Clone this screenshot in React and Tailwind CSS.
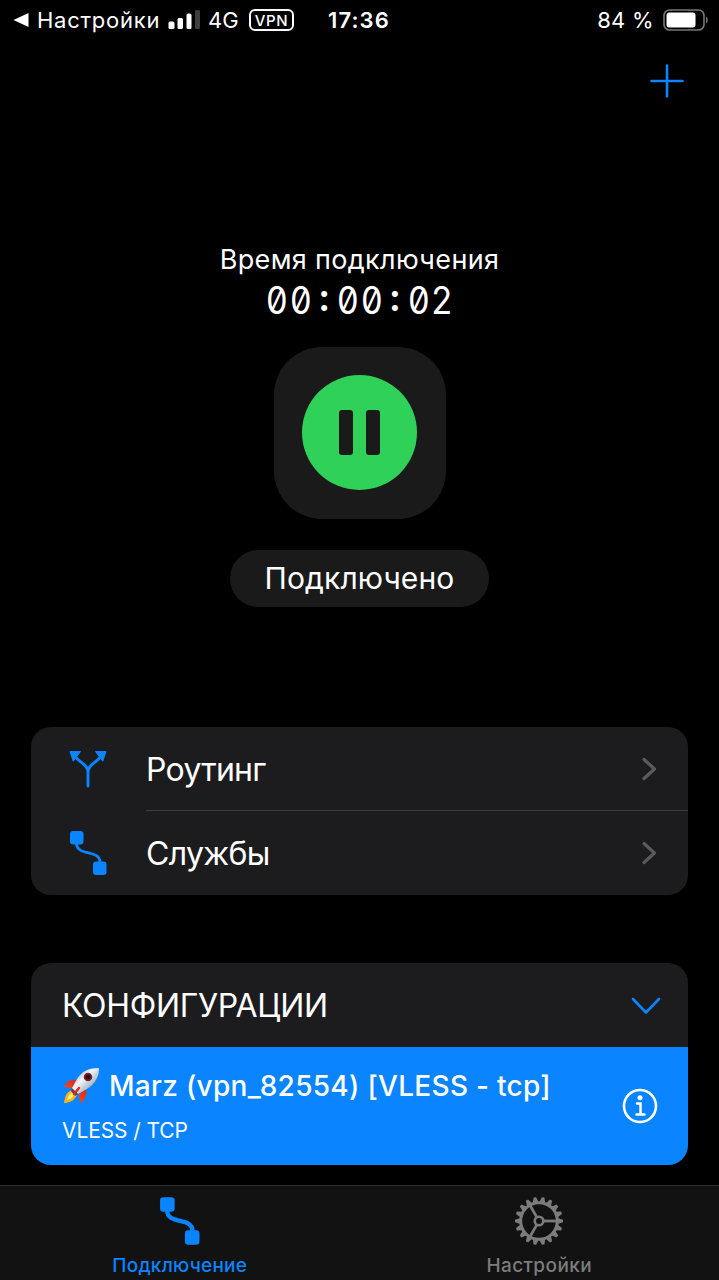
import React, { useState } from 'react';

const MENU = [
  { id: 'routing', label: 'Роутинг', icon: RoutingIcon },
  { id: 'services', label: 'Службы', icon: LinkIcon },
];

function RoutingIcon() {
  return (
    <svg width="38" height="38" viewBox="0 0 38 38" fill="none">
      <path d="M19 36V22C19 15 11.500 13 7 7.500M19 22C19 15 26.500 13 31 7.500" stroke="#0a84ff" strokeWidth="2.900" strokeLinecap="round" />
      <path d="M1 1.500h10.500L4.200 11.200zM37 1.500H26.500L33.800 11.200z" fill="#0a84ff" stroke="#0a84ff" strokeWidth="1" strokeLinejoin="round" />
    </svg>
  );
}

function LinkIcon({ className = 'w-[38px] h-[46px]', stroke = 2.8 }) {
  return (
    <svg className={className} viewBox="0 0 38 46" fill="none">
      <rect x="1" y="1" width="13.500" height="13.500" rx="3" fill="#0a84ff" />
      <rect x="24" y="31.500" width="13.500" height="13.500" rx="3" fill="#0a84ff" />
      <path d="M7.500 13C7.500 27 31 19 31 32" stroke="#0a84ff" strokeWidth={stroke} />
    </svg>
  );
}

function GearIcon() {
  const teeth = Array.from({ length: 18 }, (_, i) => i * 20);
  return (
    <svg width="50" height="50" viewBox="-25 -25 50 50" fill="none" stroke="#7c7c7c">
      {teeth.map((a) => (
        <path key={a} d="M18.500 -3L24 -1.300V1.300L18.500 3z" fill="#7c7c7c" stroke="none" transform={`rotate(${a})`} />
      ))}
      <circle r="18.300" strokeWidth="3" />
      <circle r="4.300" strokeWidth="2.600" />
      {[0, 120, 240].map((a) => (
        <path key={a} d="M5 0H18" strokeWidth="2.800" transform={`rotate(${a})`} />
      ))}
    </svg>
  );
}

function Rocket() {
  return (
    <svg width="38" height="38" viewBox="0 0 38 38">
      <defs>
        <linearGradient id="hull" x1="0" y1="0" x2="1" y2="1">
          <stop offset="0" stopColor="#74879c" />
          <stop offset=".42" stopColor="#f2f6fa" />
          <stop offset=".65" stopColor="#b4c3d2" />
          <stop offset="1" stopColor="#4b5c70" />
        </linearGradient>
        <linearGradient id="fin" x1="1" y1="0" x2="0" y2="1">
          <stop offset="0" stopColor="#c81e16" />
          <stop offset=".6" stopColor="#f2421f" />
          <stop offset="1" stopColor="#ff9c3a" />
        </linearGradient>
      </defs>
      <path d="M16 13C8 12 4 15 2 20l9 1zM24 22c1 6-1 12-6 14l-1-9z" fill="url(#fin)" />
      <path d="M10 23C4 25 3 30 2 36c5 0 10-2 13-8z" fill="#f6b51f" />
      <path d="M10 25c-3 2-4 5-5 8 4-1 6-3 8-5z" fill="#fff06a" />
      <path d="M37 1C27 1 20 4 15 12l-5 9c0 3 3 6 6 6l9-5C33 17 37 10 37 1z" fill="url(#hull)" />
      <path d="M10 21l-1 3 4 5 3-2z" fill="#7c3440" />
      <path d="M17 21l-5 6" stroke="#e0281e" strokeWidth="2.400" strokeLinecap="round" />
      <circle cx="26" cy="10" r="4.300" fill="#8b1d24" />
      <circle cx="26" cy="10" r="2.600" fill="#1d1420" />
    </svg>
  );
}

// Every character sits in an equal cell so the clock does not jump
function Timer({ value }) {
  return (
    <div className="h-12 flex text-[38px] leading-[48px] [font-feature-settings:'tnum','zero','case']">
      {value.split('').map((ch, i) => (
        <span key={i} className={`w-[23.6px] flex justify-center ${ch === ':' ? 'font-semibold' : 'scale-x-90'}`}>{ch}</span>
      ))}
    </div>
  );
}

function StatusBar() {
  return (
    <div className="h-10 flex items-center relative text-[22px] leading-none">
      <svg className="ml-[13px] w-4 h-[14px]" viewBox="0 0 16 14" fill="#fff">
        <path d="M15.500 0v14L.5 7z" />
      </svg>
      <span className="ml-2 w-[124px] whitespace-nowrap tracking-[0.75px]">Настройки</span>
      <svg className="ml-[7px] w-8 h-5" viewBox="0 0 32 20" fill="#fff">
        <rect x="0.500" y="11.500" width="6" height="7.500" rx="1.500" />
        <rect x="9.500" y="8" width="5.500" height="11" rx="1.500" />
        <rect x="18.500" y="3.500" width="5" height="15.500" rx="1.500" />
        <rect x="27" y="0" width="5" height="19" rx="1.500" fill="#3e3e3e" />
      </svg>
      <span className="ml-2 w-[33px]">4G</span>
      <span className="ml-[8px] w-[45px] h-[22px] border-2 border-white rounded-[6px] flex items-center justify-center text-[15px] font-medium tracking-[0.6px]">VPN</span>
      <span className="ml-[34px] font-semibold whitespace-nowrap tracking-[1.1px]">17:36</span>
      <span className="ml-auto mr-[9px] whitespace-nowrap tracking-[0.3px]">84 %</span>
      <svg className="mr-[11px] w-[45px] h-[22px]" viewBox="0 0 45 22">
        <rect x="1" y="1" width="40" height="20" rx="5.500" fill="none" stroke="#777" strokeWidth="1.600" />
        <rect x="3.500" y="3.500" width="29" height="15" rx="3" fill="#fff" />
        <path d="M43 7.500c2.200.8 2.200 6.200 0 7z" fill="#777" />
      </svg>
    </div>
  );
}

export default function App() {
  const [tab, setTab] = useState('connection');

  return (
    <div className="w-[719px] h-[1280px] bg-black text-white overflow-hidden flex flex-col font-['Inter',sans-serif]">
      <StatusBar />

      <div className="h-[84px] flex justify-end pr-[35px] pt-[24px]">
        <svg width="34" height="34" viewBox="0 0 34 34" stroke="#0a84ff" strokeWidth="2.600" strokeLinecap="round">
          <path d="M17 1.500v31M1.500 17h31" />
        </svg>
      </div>

      {/* Connection state */}
      <div className="h-[603px] pt-[120px] flex flex-col items-center">
        <div className="h-8 text-[27px] leading-8 tracking-[0.35px] whitespace-nowrap">Время подключения</div>
        <Timer value="00:00:02" />
        <button className="mt-[23px] size-[172px] rounded-[48px] bg-[#1a1a1a] flex items-center justify-center pb-0.5">
          <span className="size-[115px] rounded-full bg-[#30d158] flex items-center justify-center gap-[13px]">
            <span className="w-[14px] h-[45px] rounded-[3px] bg-[#1a1a1a]" />
            <span className="w-[14px] h-[45px] rounded-[3px] bg-[#1a1a1a]" />
          </span>
        </button>
        <div className="mt-[31px] w-[259px] h-[57px] rounded-full bg-[#1a1a1a] flex items-center justify-center text-[30px] tracking-[0.1px] whitespace-nowrap">Подключено</div>
      </div>

      <div className="mx-[31px] h-[168px] rounded-[20px] bg-[#1c1c1e] overflow-hidden">
        {MENU.map(({ id, label, icon: Icon }, i) => (
          <div key={id} className="h-[84px] flex items-center pl-[38px]">
            <span className="w-[38px] flex justify-center">
              <Icon />
            </span>
            <div className={`ml-[39px] h-[84px] flex-1 flex items-center justify-between pr-[31px] text-[32px] ${i === 0 ? 'border-b border-[#3d3d41]' : ''}`}>
              <span className="pt-0.5 tracking-[-0.7px]">{label}</span>
              <svg width="16" height="24" viewBox="0 0 16 24" fill="none" stroke="#5a5a5e" strokeWidth="3.200" strokeLinecap="round" strokeLinejoin="round">
                <path d="M3 2.500L13.500 12 3 21.500" />
              </svg>
            </div>
          </div>
        ))}
      </div>

      {/* Configurations */}
      <div className="mx-[31px] mt-[68px] h-[202px] rounded-[20px] bg-[#1c1c1e] overflow-hidden">
        <div className="h-[84px] flex items-center justify-between pl-[31px] pr-[27px]">
          <span className="pt-0.5 text-[32px] tracking-[-0.3px] whitespace-nowrap">КОНФИГУРАЦИИ</span>
          <svg className="mt-0.5" width="30" height="20" viewBox="0 0 30 20" fill="none" stroke="#0a84ff" strokeWidth="2.600" strokeLinecap="round" strokeLinejoin="round">
            <path d="M2 3l13 13.500L28 3" />
          </svg>
        </div>
        <div className="h-[118px] bg-[#0a84ff] flex items-center justify-between pl-[31px] pr-[30px]">
          <div className="h-full pt-[20px]">
            <div className="h-[38px] flex items-center gap-[9px] text-[28px] font-medium tracking-[0.3px] whitespace-nowrap">
              <Rocket />
              <span>Marz (vpn_82554) [VLESS - tcp]</span>
            </div>
            <div className="mt-[11px] text-[21px] leading-[30px] tracking-[-0.1px]">VLESS / TCP</div>
          </div>
          <svg width="36" height="36" viewBox="0 0 36 36" fill="none" stroke="#fff">
            <circle cx="18" cy="18" r="16" strokeWidth="2.600" />
            <circle cx="18" cy="9.800" r="2.500" fill="#fff" stroke="none" />
            <path d="M15 15.500h3.500V26M14.500 26.500h8" strokeWidth="2.500" strokeLinecap="round" />
          </svg>
        </div>
      </div>

      {/* Tab bar */}
      <div className="mt-auto h-[95px] bg-[#121212] border-t border-[#2c2c2c] grid grid-cols-2 text-[19px] font-medium leading-6">
        <button onClick={() => setTab('connection')} aria-pressed={tab === 'connection'} className="flex flex-col items-center pt-[10px] text-[#0a84ff]">
          <LinkIcon className="w-[41px] h-[50px]" stroke={4} />
          <span className="mt-[8px] tracking-[0.25px]">Подключение</span>
        </button>
        <button onClick={() => setTab('settings')} aria-pressed={tab === 'settings'} className="flex flex-col items-center pt-[10px] text-[#7c7c7c]">
          <GearIcon />
          <span className="mt-[8px] tracking-[0.4px]">Настройки</span>
        </button>
      </div>
    </div>
  );
}
